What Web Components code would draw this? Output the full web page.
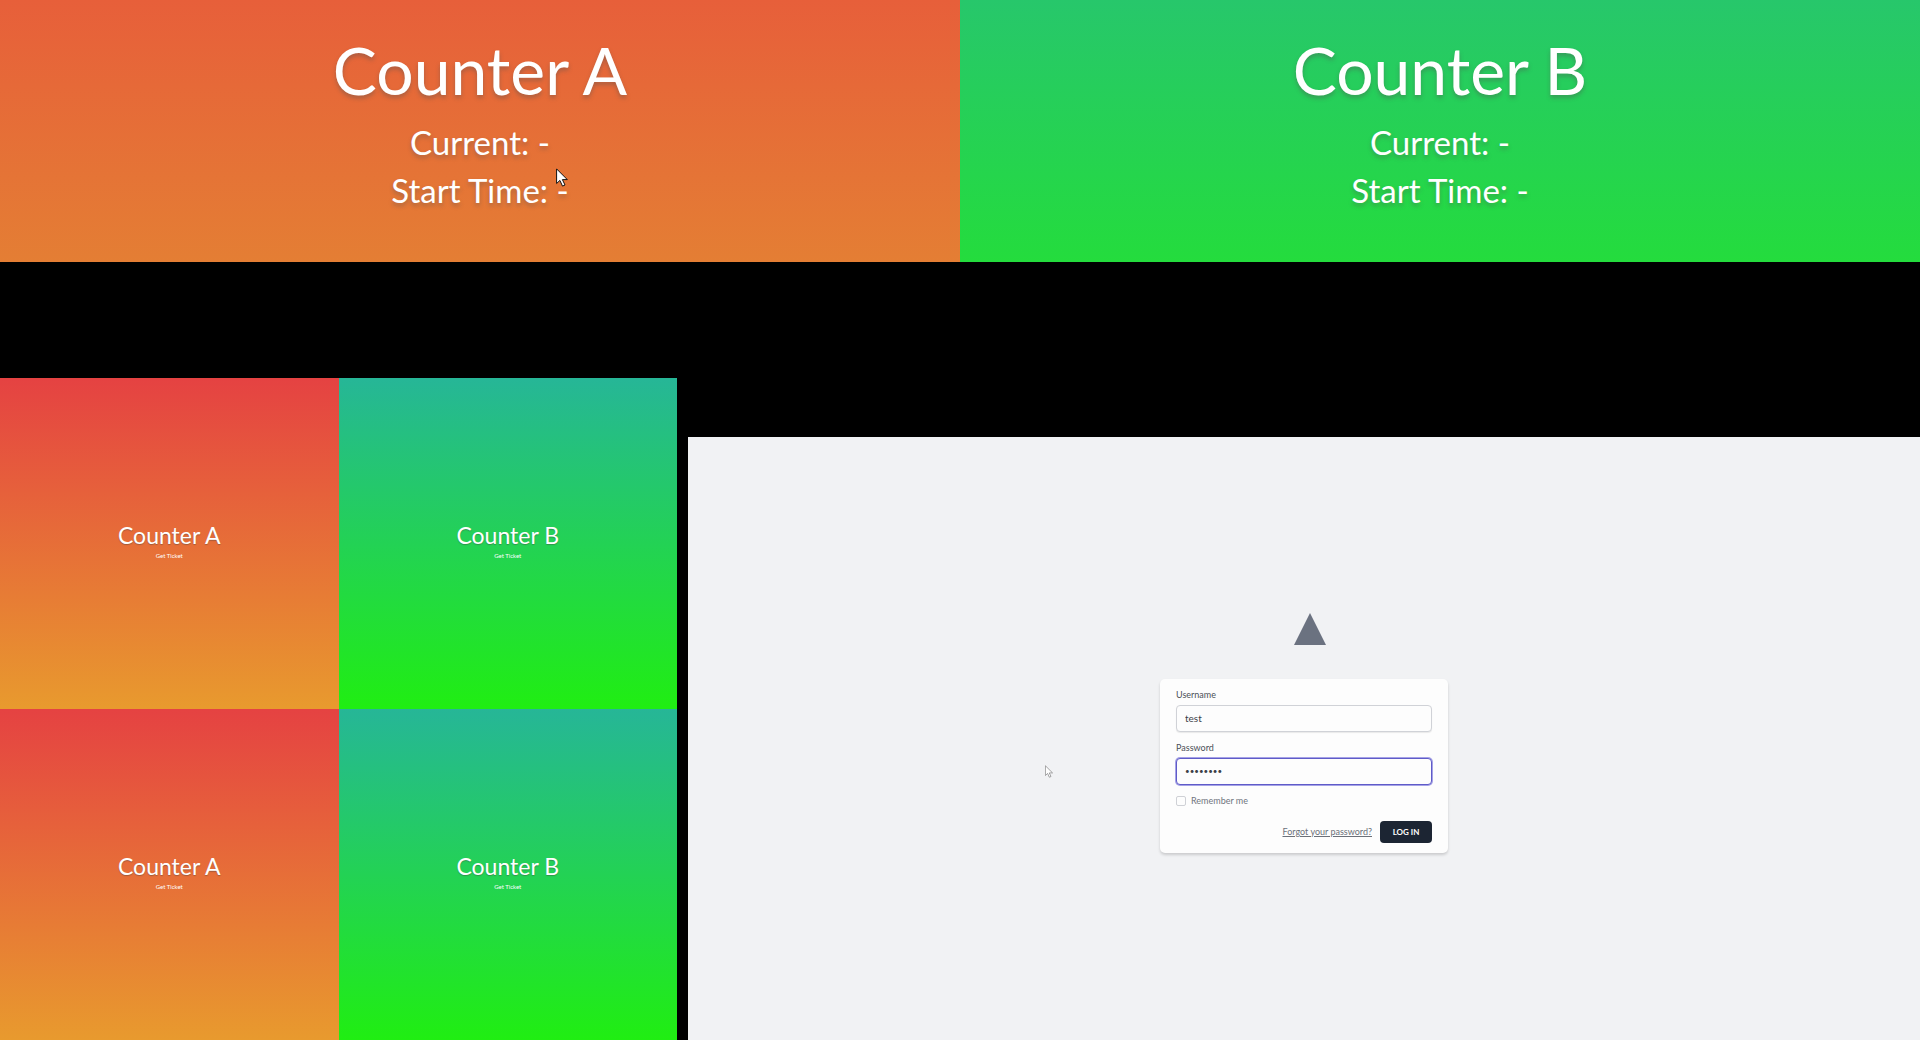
<!DOCTYPE html>
<html lang="en">
<head>
<meta charset="utf-8">
<title>Queue counters</title>
<style>
  html, body { margin: 0; min-height: 100vh; background: #000; }
  body { font-family: Lato, "Open Sans", sans-serif; }
</style>
</head>
<body>
<queue-app></queue-app>
<script>
class BaseElement extends HTMLElement {
  connectedCallback() {
    if (this.shadowRoot) return;
    this.attachShadow({ mode: "open" }).innerHTML = this.render();
  }
}

customElements.define("mouse-pointer", class extends BaseElement {
  render() {
    return `<style>
      :host { display: block; position: absolute; }
      svg { display: block; width: 100%; height: 100%; }
    </style>
    <svg viewBox="0 0 12 19" aria-hidden="true"><path d="M.6.9v14.6l3.3-3.1 2.6 5.7 2.5-1.1-2.6-5.4h4.9z" fill="#fff" stroke="var(--edge, #111)" stroke-width="1"/></svg>`;
  }
});

customElements.define("counter-status", class extends BaseElement {
  render() {
    return `<style>
      :host { display: flex; flex-direction: column; align-items: center; flex: 1; box-sizing: border-box;
        height: 262px; padding-top: 30px; color: #fff;
        background: linear-gradient(var(--from), var(--to)); text-shadow: 0 3px 4px rgba(80,80,80,.4); }
      h1 { margin: 0 0 8px; font-size: 66px; line-height: 80px; font-weight: 400; }
      p { margin: 0; font-size: 33px; line-height: 48px; }
    </style>
    <h1><slot></slot></h1>
    <p>Current: -</p>
    <p>Start Time: -</p>`;
  }
});

customElements.define("ticket-tile", class extends BaseElement {
  render() {
    return `<style>
      :host { display: flex; flex-direction: column; align-items: center; justify-content: center;
        box-sizing: border-box; padding-bottom: 8px;
        color: #fff; background: linear-gradient(var(--from), var(--to)); text-shadow: 0 1px 1px rgba(60,60,60,.4); }
      h2 { margin: 0; font-size: 23px; line-height: 32px; font-weight: 400; }
      button { border: 0; padding: 0; background: none; color: inherit; font: 6px/10px Lato, sans-serif; text-shadow: none; }
    </style>
    <h2><slot></slot></h2>
    <button type="button">Get Ticket</button>`;
  }
});

customElements.define("login-card", class extends BaseElement {
  render() {
    return `<style>
      :host { display: block; box-sizing: border-box; width: 288px; padding: 10px 16px; border-radius: 5px;
        background: #fdfdfd; color: #4b5058; box-shadow: 0 2px 3px rgba(0,0,0,.16); font-size: 9px; line-height: 12px; }
      form { display: flex; flex-direction: column; }
      .field { display: flex; flex-direction: column; gap: 4px; margin-bottom: 10px; }
      .field input { box-sizing: border-box; width: 100%; height: 27px; padding: 0 8px; border: 1px solid #d0d2d7;
        border-radius: 4px; outline: 0; background: #fdfdfd; color: #3d4148; font: 10px Lato, sans-serif;
        box-shadow: 0 1px 1px rgba(0,0,0,.08); }
      .field input[type=password] { border-color: #5f5bc8; box-shadow: 0 0 0 1px #a5a2e6; font-size: 8px; }
      .remember { display: flex; align-items: center; gap: 5px; color: #70757e; }
      .remember input { appearance: none; box-sizing: border-box; width: 10px; height: 10px; margin: 0;
        border: 1px solid #cfd1d6; border-radius: 2px; }
      .actions { display: flex; justify-content: flex-end; align-items: center; gap: 8px; margin-top: 14px; }
      a { color: #6b7079; text-underline-offset: 1px; }
      button { box-sizing: border-box; width: 52px; height: 22px; padding: 0; border: 0; border-radius: 4px;
        background: #1c2533; color: #fff; font: 700 8px Lato, sans-serif; }
    </style>
    <form>
      <div class="field"><label for="user">Username</label><input id="user" type="text" value="test"></div>
      <div class="field"><label for="pass">Password</label><input id="pass" type="password" value="password"></div>
      <label class="remember"><input type="checkbox">Remember me</label>
      <div class="actions"><a href="#">Forgot your password?</a><button type="button">LOG IN</button></div>
    </form>`;
  }
});

customElements.define("login-screen", class extends BaseElement {
  render() {
    return `<style>
      :host { display: flex; flex-direction: column; align-items: center; justify-content: center; gap: 34px;
        position: relative; box-sizing: border-box; padding-bottom: 12px; background: #f1f2f4; }
      .logo { width: 32px; height: 32px; margin-left: 12px; }
      mouse-pointer { left: 357px; top: 328px; width: 8px; height: 13px; --edge: #777; }
    </style>
    <svg class="logo" viewBox="0 0 32 32" role="img" aria-label="Logo"><path d="M16 0 32 32H0z" fill="#6b7280"/></svg>
    <login-card></login-card>
    <mouse-pointer></mouse-pointer>`;
  }
});

customElements.define("queue-app", class extends BaseElement {
  render() {
    return `<style>
      :host { display: flex; flex-direction: column; position: relative; min-height: 100vh; background: #000; }
      .status { display: flex; }
      .screens { display: flex; flex: 1; gap: 11px; }
      .tiles { display: grid; grid-template-columns: 1fr 1fr; grid-auto-rows: 1fr; flex: 677; min-width: 0; margin-top: 116px; }
      login-screen { flex: 1232; min-width: 0; margin-top: 175px; }
      .status .a { --from: #e75f3a; --to: #e47e34; }
      .status .b { --from: #27c76b; --to: #24dc3d; }
      .tiles .a { --from: #e54242; --to: #e89a2e; }
      .tiles .b { --from: #26b697; --to: #20ee12; }
      mouse-pointer { left: 556px; top: 168px; width: 12px; height: 19px; }
    </style>
    <header class="status">
      <counter-status class="a">Counter A</counter-status>
      <counter-status class="b">Counter B</counter-status>
    </header>
    <main class="screens">
      <section class="tiles">
        <ticket-tile class="a">Counter A</ticket-tile><ticket-tile class="b">Counter B</ticket-tile>
        <ticket-tile class="a">Counter A</ticket-tile><ticket-tile class="b">Counter B</ticket-tile>
      </section>
      <login-screen></login-screen>
    </main>
    <mouse-pointer></mouse-pointer>`;
  }
});
</script>
</body>
</html>
